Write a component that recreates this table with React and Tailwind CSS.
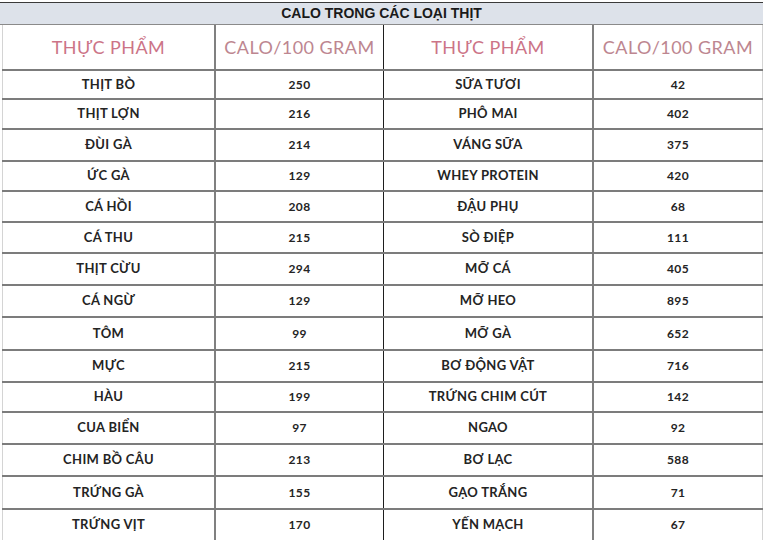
const rows = [
  { h: "h-[29px]", a: "THỊT BÒ", b: "250", c: "SỮA TƯƠI", d: "42" },
  { h: "h-[30px]", a: "THỊT LỢN", b: "216", c: "PHÔ MAI", d: "402" },
  { h: "h-[32px]", a: "ĐÙI GÀ", b: "214", c: "VÁNG SỮA", d: "375" },
  { h: "h-[30px]", a: "ỨC GÀ", b: "129", c: "WHEY PROTEIN", d: "420" },
  { h: "h-[31px]", a: "CÁ HỒI", b: "208", c: "ĐẬU PHỤ", d: "68" },
  { h: "h-[31px]", a: "CÁ THU", b: "215", c: "SÒ ĐIỆP", d: "111" },
  { h: "h-[32px]", a: "THỊT CỪU", b: "294", c: "MỠ CÁ", d: "405" },
  { h: "h-[32px]", a: "CÁ NGỪ", b: "129", c: "MỠ HEO", d: "895" },
  { h: "h-[33px]", a: "TÔM", b: "99", c: "MỠ GÀ", d: "652" },
  { h: "h-[32px]", a: "MỰC", b: "215", c: "BƠ ĐỘNG VẬT", d: "716" },
  { h: "h-[30px]", a: "HÀU", b: "199", c: "TRỨNG CHIM CÚT", d: "142" },
  { h: "h-[32px]", a: "CUA BIỂN", b: "97", c: "NGAO", d: "92" },
  { h: "h-[32px]", a: "CHIM BỒ CÂU", b: "213", c: "BƠ LẠC", d: "588" },
  { h: "h-[33px]", a: "TRỨNG GÀ", b: "155", c: "GẠO TRẮNG", d: "71" },
  { h: "h-[32px]", a: "TRỨNG VỊT", b: "170", c: "YẾN MẠCH", d: "67" },
];

function Row({ className, children }) {
  return <div className={"flex border-b-2 border-[#7c7c7c] " + className}>{children}</div>;
}

export default function App() {
  return (
    <div className="w-[768px] h-[540px] overflow-hidden bg-white pt-[2px] font-['Lato',sans-serif]">
      <div className="w-[763px] h-[23px] border-t border-b border-t-[#3a3a3a] border-b-[#8a8a8a] bg-[#dde2ea] flex items-center justify-center font-['Liberation_Sans',sans-serif] font-bold text-[14px] text-[#1a1a1a]">
        CALO TRONG CÁC LOẠI THỊT
      </div>
      <div className="ml-[2px] w-[761px]">
        <Row className="h-[46px] text-[18px] tracking-wide">
          <div className="w-[214px] border-l border-[#d4d4d4] border-r-2 border-r-[#808080] flex items-center justify-center text-[#cc7487]">
            THỰC PHẨM
          </div>
          <div className="w-[168px] border-r-[1.5px] border-[#1e1e1e] flex items-center justify-center text-[#bd8690]">
            CALO/100 GRAM
          </div>
          <div className="w-[210px] border-r-2 border-[#808080] flex items-center justify-center text-[#cc7487]">
            THỰC PHẨM
          </div>
          <div className="flex-1 border-r border-[#d4d4d4] flex items-center justify-center text-[#bd8690]">
            CALO/100 GRAM
          </div>
        </Row>
        {rows.map((r) => (
          <Row key={r.a} className={r.h + " text-[13px] font-bold tracking-wide text-[#242424]"}>
            <div className="w-[214px] border-l border-[#d4d4d4] border-r-2 border-r-[#808080] flex items-center justify-center">
              {r.a}
            </div>
            <div className="w-[168px] border-r-[1.5px] border-[#1e1e1e] flex items-center justify-center text-[12px]">
              {r.b}
            </div>
            <div className="w-[210px] border-r-2 border-[#808080] flex items-center justify-center">
              {r.c}
            </div>
            <div className="flex-1 border-r border-[#d4d4d4] flex items-center justify-center text-[12px]">
              {r.d}
            </div>
          </Row>
        ))}
      </div>
    </div>
  );
}
